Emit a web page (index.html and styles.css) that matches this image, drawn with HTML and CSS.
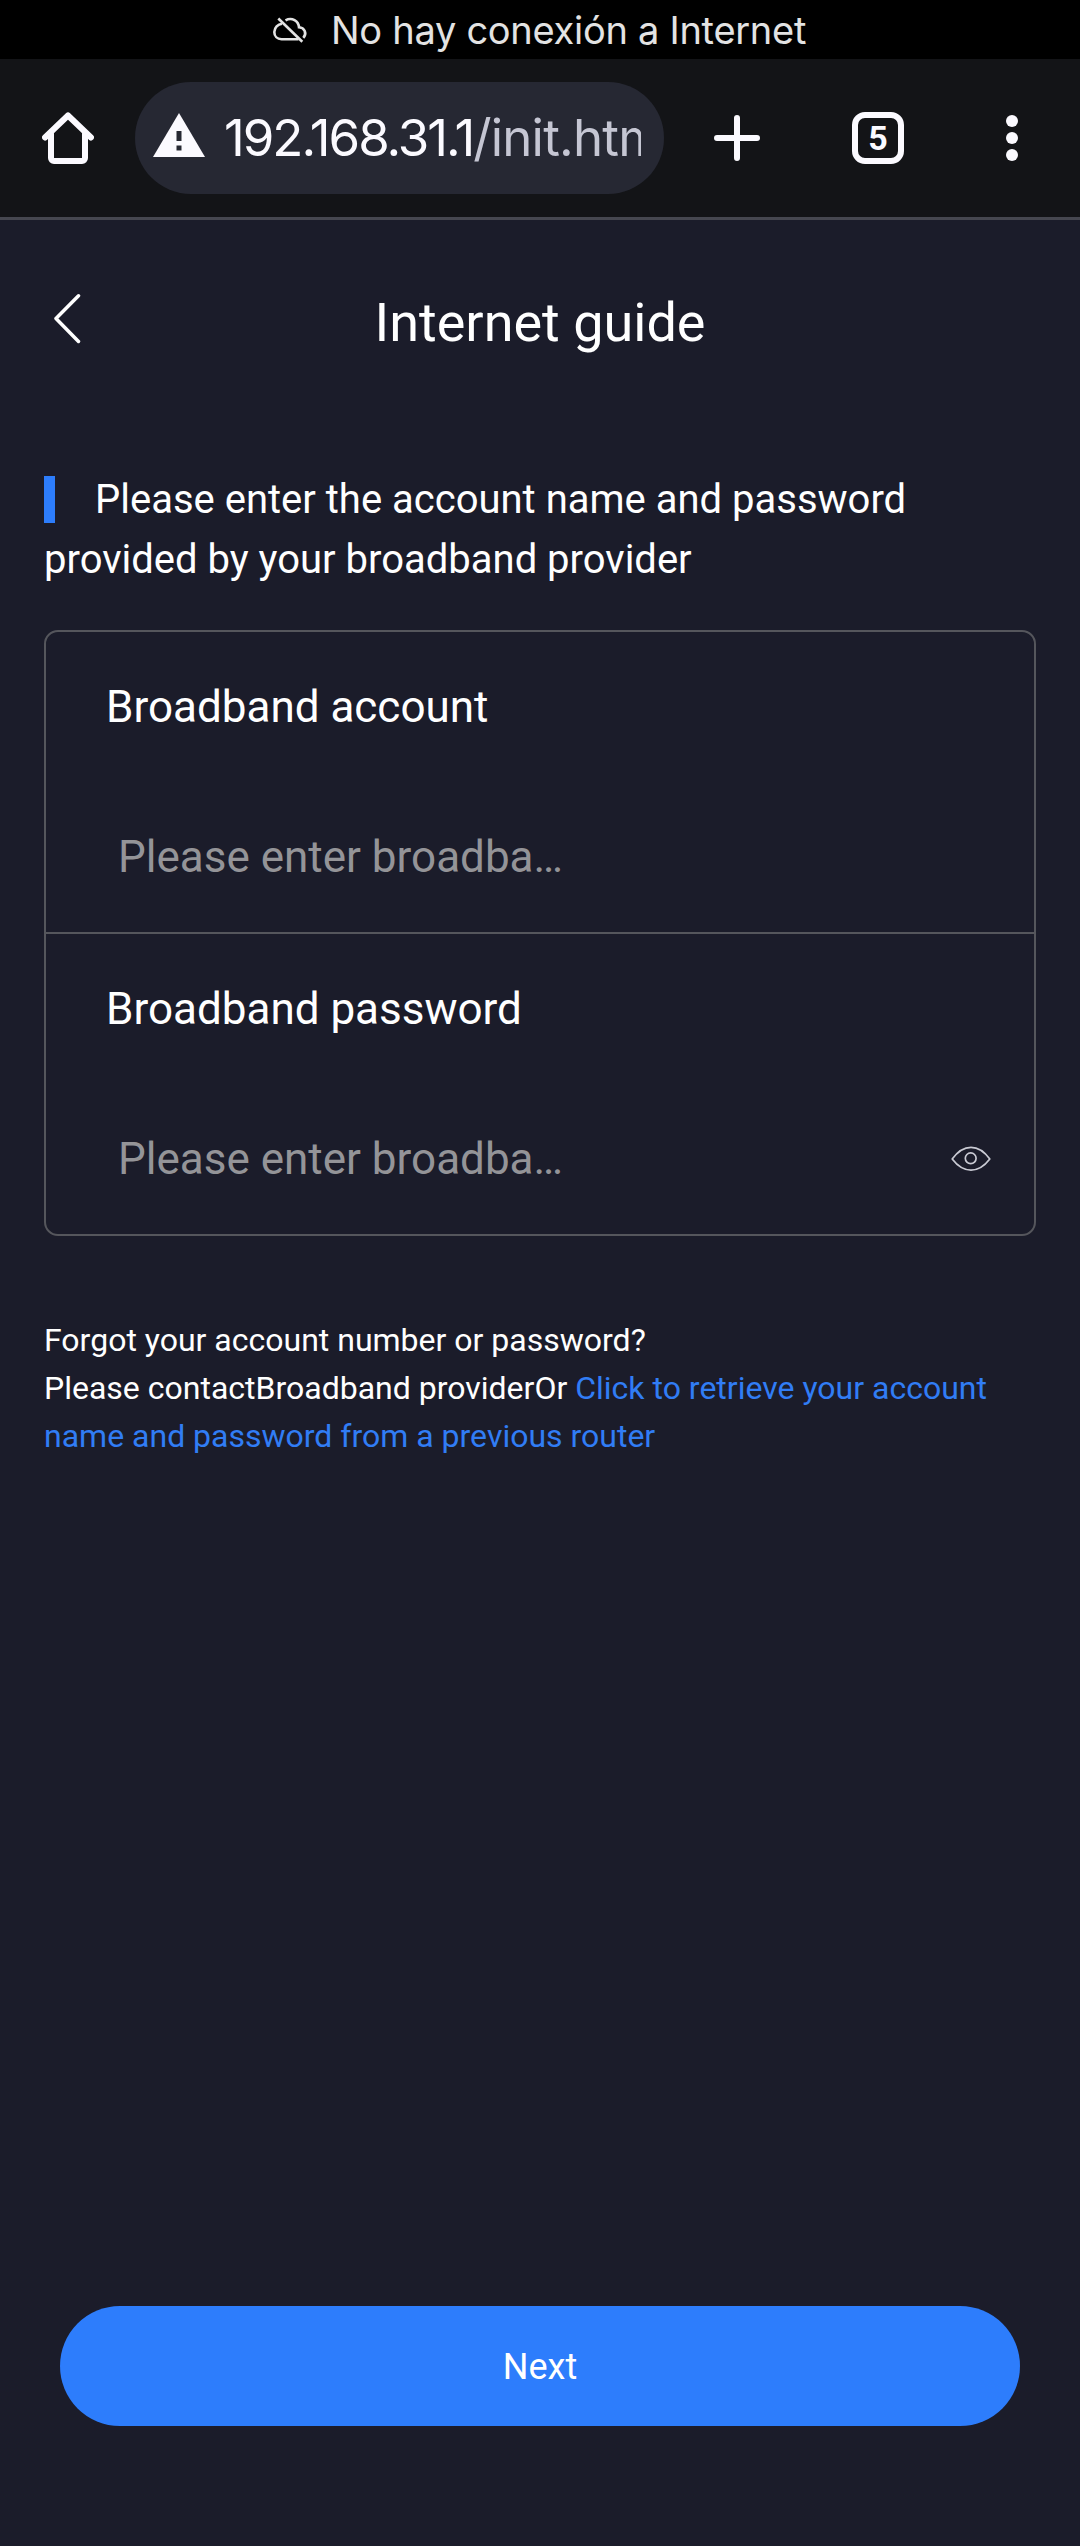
FILE: index.html
```
<!DOCTYPE html>
<html lang="en">
<head>
<meta charset="utf-8">
<title>Internet guide</title>
<link rel="stylesheet" href="styles.css">
</head>
<body>
<div class="status">
  <svg class="status-icon" width="36" height="28" viewBox="0 0 36 28" fill="none" stroke="#e3e3e3" stroke-width="2.6">
    <path d="M10 7.8A8.6 8.6 0 0 0 2.3 16c0 4.200 3 7.200 7.200 7.200H26.500"/>
    <path d="M13.500 4.300C20 0.800 26.500 5 27 11.200C32.500 11.500 35.300 17.500 31.300 21.800"/>
    <path d="M6.300 2.500L30.300 25.700"/>
  </svg>
  <span class="status-text">No hay conexión a Internet</span>
</div>
<header class="toolbar">
  <svg class="home" width="52" height="52" viewBox="0 0 52 52" fill="none" stroke="#fbfaff" stroke-width="6" stroke-linejoin="round" stroke-linecap="round">
    <path d="M3 25.500L26 3.500L49 25.500"/><path d="M9 22V46a3 3 0 0 0 3 3H40a3 3 0 0 0 3-3V22"/>
  </svg>
  <div class="omnibox">
    <svg width="52" height="44" viewBox="0 0 52 44"><path fill="#fbfaff" d="M26 0L52 44H0Z"/><path fill="#262833" d="M23.500 18h5v10h-5zM23.500 32.500h5v5h-5z"/></svg>
    <div class="url"><span class="host">192.168.31.1</span><span class="path">/init.html</span></div>
  </div>
  <svg class="plus" width="46" height="46" viewBox="0 0 46 46" stroke="#fbfaff" stroke-width="6" stroke-linecap="round"><path d="M23 3V43M3 23H43"/></svg>
  <div class="tabs">5</div>
  <svg class="more" width="12" height="48" viewBox="0 0 12 48" fill="#fbfaff"><circle cx="6" cy="7" r="6"/><circle cx="6" cy="24" r="6"/><circle cx="6" cy="41" r="6"/></svg>
</header>
<main class="page">
  <div class="heading">
    <svg class="back" width="28" height="52" viewBox="0 0 28 52" fill="none" stroke="#fff" stroke-width="3.500" stroke-linecap="round" stroke-linejoin="round"><path d="M24.500 2.800L2 25.500L24.500 48.500"/></svg>
    <h1 class="title">Internet guide</h1>
  </div>
  <p class="hint"><span class="marker"></span>Please enter the account name and password provided by your broadband provider</p>
  <form class="card">
    <div class="field">
      <div class="label">Broadband account</div>
      <div class="entry"><span class="placeholder">Please enter broadba…</span></div>
    </div>
    <div class="field">
      <div class="label">Broadband password</div>
      <div class="entry"><span class="placeholder">Please enter broadba…</span>
        <svg class="eye" width="40" height="26" viewBox="0 0 40 26" fill="none" stroke="#c9cad3" stroke-width="1.700" stroke-linejoin="round"><path d="M1.200 13C12.500-2.600 27.500-2.600 38.800 13C27.500 27.800 12.500 27.800 1.200 13Z"/><circle cx="19.700" cy="12.300" r="5.400"/></svg>
      </div>
    </div>
  </form>
  <p class="help">Forgot your account number or password?<br>Please contactBroadband providerOr <a class="link">Click to retrieve your account name and password from a previous router</a></p>
  <button class="next" type="button">Next</button>
</main>
</body>
</html>
```
FILE: styles.css
```
* { box-sizing: border-box; }
body {
  margin: 0;
  min-height: 2546px;
  display: flex;
  flex-direction: column;
  background: #1b1c2a;
  color: #fff;
  font-family: Roboto, "Liberation Sans", sans-serif;
}
.status {
  height: 59px;
  padding-left: 272px;
  display: flex;
  align-items: center;
  background: #000;
  color: #e3e3e3;
}
.status-icon { margin-top: 1px; }
.status-text {
  margin-left: 23px;
  padding-top: 1px;
  font: 38px/59px Inter, sans-serif;
  letter-spacing: -0.28px;
  white-space: nowrap;
}
.toolbar {
  height: 161px;
  padding: 0 62px 0 42px;
  display: flex;
  align-items: center;
  background: #131417;
  border-bottom: 3px solid #464750;
}
.omnibox {
  width: 529px;
  height: 112px;
  margin-left: 41px;
  padding: 0 23px 0 18px;
  display: flex;
  align-items: center;
  border-radius: 56px;
  background: #262833;
}
.omnibox svg { flex: none; margin-top: -6px; }
.url {
  flex: 1;
  margin-left: 19px;
  overflow: hidden;
  font: 51px/80px Inter, sans-serif;
  letter-spacing: -2px;
  color: #fbfaff;
  white-space: nowrap;
}
.path { color: #c5c6d3; letter-spacing: -0.8px; }
.plus { margin-left: 50px; }
.tabs {
  width: 52px;
  height: 52px;
  margin-left: 92px;
  border: 6px solid #fbfaff;
  border-radius: 13px;
  color: #fbfaff;
  font: bold 34px/41px Roboto, sans-serif;
  text-align: center;
}
.more { margin-left: auto; }
.page {
  flex: 1;
  display: flex;
  flex-direction: column;
  padding: 0 44px 120px;
}
.heading {
  height: 205px;
  display: grid;
  grid-template-columns: 28px 1fr 28px;
  align-items: center;
}
.back { margin: -8px 0 0 10px; }
.title {
  margin: 0;
  font-size: 54px;
  font-weight: 400;
  text-align: center;
}
.hint {
  margin: 45px 0 40px;
  font-size: 40px;
  line-height: 60px;
}
.marker {
  display: inline-block;
  width: 11px;
  height: 47px;
  margin-right: 40px;
  vertical-align: -10px;
  background: #2d7dfc;
}
.card {
  border: 2px solid #55565c;
  border-radius: 14px;
  font-size: 44px;
  line-height: 150px;
}
.field + .field { border-top: 2px solid #55565c; }
.label { height: 150px; padding-left: 60px; }
.entry {
  height: 150px;
  padding: 0 43px 0 72px;
  display: flex;
  align-items: center;
  justify-content: space-between;
  color: #949498;
}
.eye { margin-top: -1px; }
.help {
  margin: 80px 0 0;
  font-size: 32px;
  line-height: 48px;
}
.link { color: #317df5; }
.next {
  height: 120px;
  margin: auto 16px 0;
  border: 0;
  border-radius: 60px;
  background: #2d7dfc;
  color: #fff;
  font: 36px/120px Roboto, sans-serif;
}
```
